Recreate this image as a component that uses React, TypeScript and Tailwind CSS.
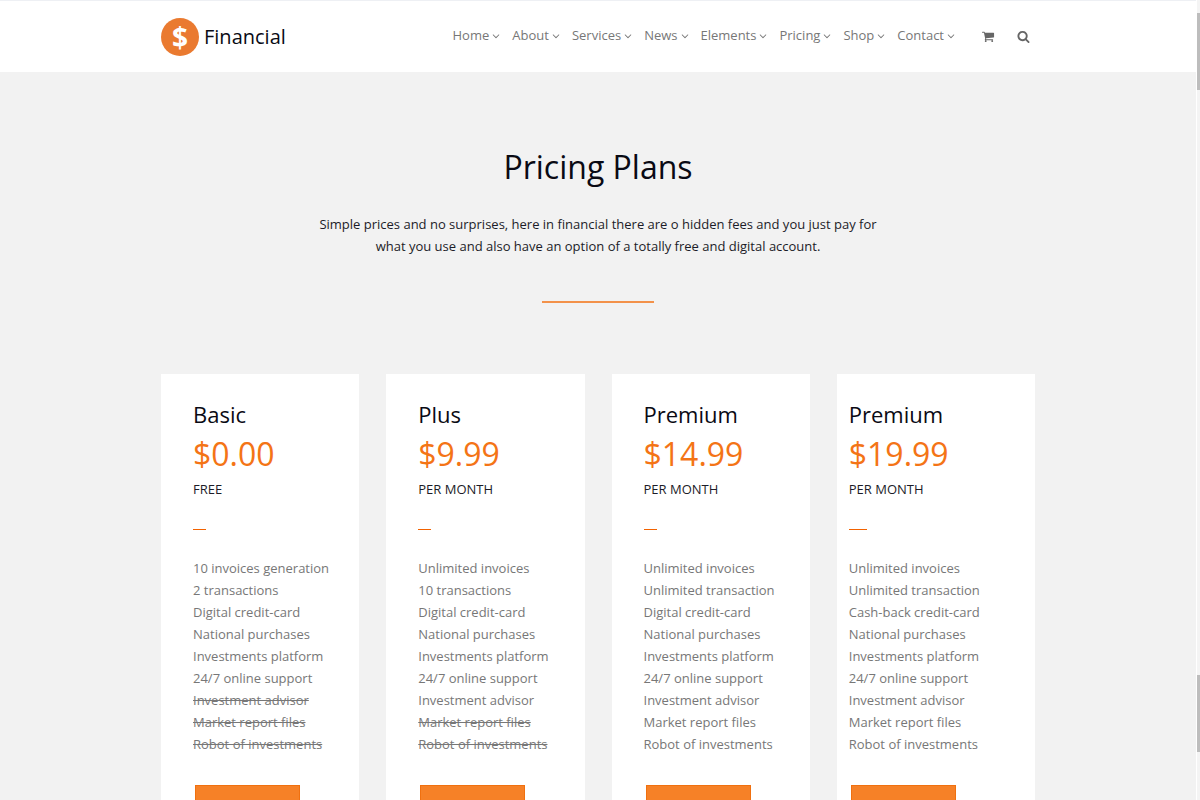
import React from 'react'

interface Feature {
  label: string
  excluded?: boolean
}

interface Plan {
  id: string
  name: string
  price: string
  period: string
  features: Feature[]
  compact?: boolean
}

const navItems = ['Home', 'About', 'Services', 'News', 'Elements', 'Pricing', 'Shop', 'Contact']

const plans: Plan[] = [
  {
    id: 'basic',
    name: 'Basic',
    price: '$0.00',
    period: 'FREE',
    features: [
      { label: '10 invoices generation' },
      { label: '2 transactions' },
      { label: 'Digital credit-card' },
      { label: 'National purchases' },
      { label: 'Investments platform' },
      { label: '24/7 online support' },
      { label: 'Investment advisor', excluded: true },
      { label: 'Market report files', excluded: true },
      { label: 'Robot of investments', excluded: true },
    ],
  },
  {
    id: 'plus',
    name: 'Plus',
    price: '$9.99',
    period: 'PER MONTH',
    features: [
      { label: 'Unlimited invoices' },
      { label: '10 transactions' },
      { label: 'Digital credit-card' },
      { label: 'National purchases' },
      { label: 'Investments platform' },
      { label: '24/7 online support' },
      { label: 'Investment advisor' },
      { label: 'Market report files', excluded: true },
      { label: 'Robot of investments', excluded: true },
    ],
  },
  {
    id: 'premium',
    name: 'Premium',
    price: '$14.99',
    period: 'PER MONTH',
    features: [
      { label: 'Unlimited invoices' },
      { label: 'Unlimited transaction' },
      { label: 'Digital credit-card' },
      { label: 'National purchases' },
      { label: 'Investments platform' },
      { label: '24/7 online support' },
      { label: 'Investment advisor' },
      { label: 'Market report files' },
      { label: 'Robot of investments' },
    ],
  },
  {
    id: 'premium-cashback',
    name: 'Premium',
    price: '$19.99',
    period: 'PER MONTH',
    compact: true,
    features: [
      { label: 'Unlimited invoices' },
      { label: 'Unlimited transaction' },
      { label: 'Cash-back credit-card' },
      { label: 'National purchases' },
      { label: 'Investments platform' },
      { label: '24/7 online support' },
      { label: 'Investment advisor' },
      { label: 'Market report files' },
      { label: 'Robot of investments' },
    ],
  },
]

const AngleDown = () => (
  <svg viewBox="0 0 1792 1792" className="w-3 h-3 ml-px fill-current" aria-hidden="true">
    <path d="M1395 736q0 13-10 23l-466 466q-10 10-23 10t-23-10l-466-466q-10-10-10-23t10-23l50-50q10-10 23-10t23 10l393 393 393-393q10-10 23-10t23 10l50 50q10 10 10 23z" />
  </svg>
)

const CartIcon = () => (
  <svg viewBox="0 0 1792 1792" className="w-[13px] h-[13px] fill-current" aria-hidden="true">
    <path d="M640 1536q0 52-38 90t-90 38-90-38-38-90 38-90 90-38 90 38 38 90zm896 0q0 52-38 90t-90 38-90-38-38-90 38-90 90-38 90 38 38 90zm128-1088v512q0 24-16.500 42.500t-40.500 21.500l-1044 122q13 60 13 70 0 16-24 64h920q26 0 45 19t19 45-19 45-45 19h-1024q-26 0-45-19t-19-45q0-11 8-31.500t16-36 21.500-40 15.500-29.500l-177-823h-204q-26 0-45-19t-19-45 19-45 45-19h256q16 0 28.500 6.500t19.500 15.500 13 24.500 8 26 5.500 29.500 4.500 26h1201q26 0 45 19t19 45z" />
  </svg>
)

const SearchIcon = () => (
  <svg viewBox="0 0 1792 1792" className="w-[13px] h-[13px] fill-current" aria-hidden="true">
    <path d="M1216 832q0-185-131.500-316.500t-316.500-131.500-316.500 131.500-131.500 316.500 131.500 316.500 316.500 131.500 316.500-131.500 131.500-316.500zm512 832q0 52-38 90t-90 38q-54 0-90-38l-343-342q-179 124-399 124-143 0-273.500-55.500t-225-150-150-225-55.500-273.500 55.500-273.500 150-225 225-150 273.500-55.500 273.500 55.500 225 150 150 225 55.500 273.500q0 220-124 399l343 343q37 37 37 90z" />
  </svg>
)

const Header: React.FC = () => (
  <header className="bg-white border-t border-[#eef0f4]">
    <div className="max-w-[874px] mx-auto h-[71px] flex items-center justify-between">
      <a href="#home" className="flex items-center gap-[5px] text-xl text-[#0a0a14]">
        <span className="w-[38px] h-[38px] rounded-full bg-[#ea7a30] flex items-center justify-center text-[28px] leading-[38px] font-bold text-white">
          $
        </span>
        Financial
      </a>

      <nav className="flex items-center gap-2.5 pb-px text-[13px] text-[#777]">
        {navItems.map((item) => (
          <a key={item} href={`#${item.toLowerCase()}`} className="flex items-center">
            {item}
            <AngleDown />
          </a>
        ))}
        <div className="flex items-center gap-[22px] pl-[15px] pr-[5px] text-[#666]">
          <button type="button" aria-label="Cart">
            <CartIcon />
          </button>
          <button type="button" aria-label="Search">
            <SearchIcon />
          </button>
        </div>
      </nav>
    </div>
  </header>
)

const PlanCard: React.FC<{ plan: Plan }> = ({ plan }) => {
  const padding = plan.compact ? 'px-3' : 'px-8'
  const ruleWidth = plan.compact ? 'w-[18px]' : 'w-[13px]'

  return (
    <article className={'bg-white pt-[23px] pb-8 ' + padding}>
      <h2 className="text-[22px] leading-[34px] text-[#0a0a14]">{plan.name}</h2>
      <p className="mt-px text-[32px] leading-[44px] text-[#f47416]">{plan.price}</p>
      <p className="mt-0.5 text-[13px] leading-[22px] text-[#1c1c28]">{plan.period}</p>
      <div className={'mt-[29px] mb-[27px] h-px bg-[#f26200] ' + ruleWidth} />
      <ul className="text-[13px] leading-[22px] text-[#777] whitespace-nowrap">
        {plan.features.map((feature) => (
          <li key={feature.label} className={feature.excluded ? 'line-through' : ''}>
            {feature.label}
          </li>
        ))}
      </ul>
      <button
        type="button"
        aria-label={`Choose ${plan.name}`}
        className="block mt-[30px] ml-0.5 w-[105px] h-10 bg-[#f68127] border border-[#f0700f]"
      />
    </article>
  )
}

// Slim scrollbar track on the right edge
const ScrollRail = () => (
  <div className="w-1 shrink-0 flex flex-col justify-between items-end bg-[#f4f4f4] border-l border-white pt-[13px] pb-12" aria-hidden="true">
    <div className="w-[3px] h-[77px] bg-[#bdbdbd]" />
    <div className="w-[3px] h-[77px] bg-[#bdbdbd]" />
  </div>
)

const App: React.FC = () => {
  return (
    <div className="h-screen overflow-hidden flex bg-[#f2f2f2] font-['Open_Sans',sans-serif]">
      <div className="flex-1 min-w-0">
        <Header />

        <main>
          <section className="pt-[71px] text-center">
            <h1 className="text-[32px] leading-[48px] text-[#0a0a14]">Pricing Plans</h1>
            <p className="max-w-[560px] mx-auto mt-[22px] text-[13px] leading-[22px] text-[#1c1c28]">
              Simple prices and no surprises, here in financial there are o hidden fees and you just pay for
              what you use and also have an option of a totally free and digital account.
            </p>
            <hr className="w-28 mx-auto mt-11 border-t-2 border-[#f3924a]" />
          </section>

          <section className="max-w-[874px] mx-auto mt-[71px] grid grid-cols-4 gap-[27px]">
            {plans.map((plan) => (
              <PlanCard key={plan.id} plan={plan} />
            ))}
          </section>
        </main>
      </div>
      <ScrollRail />
    </div>
  )
}

export default App
